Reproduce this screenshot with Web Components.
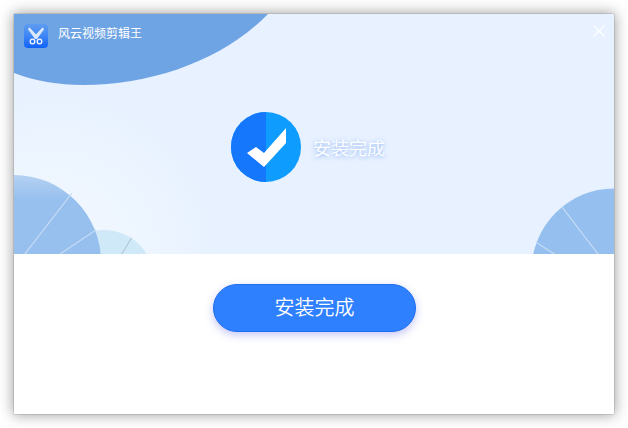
<!DOCTYPE html>
<html lang="zh">
<head>
<meta charset="utf-8">
<title>风云视频剪辑王</title>
<style>
html, body { margin: 0; background: #fff; }
body {
	padding: 14px;
	width: 600px;
	height: 400px;
	font-family: "Noto Sans CJK SC", "Liberation Sans", sans-serif;
	font-weight: 350;
}
</style>
</head>
<body>
<installer-window>
	<hero-panel slot="hero">
		<title-bar name="风云视频剪辑王"></title-bar>
		<status-badge>安装完成</status-badge>
	</hero-panel>
	<primary-button slot="footer">安装完成</primary-button>
</installer-window>

<script>
class InstallerWindow extends HTMLElement {
	constructor() {
		super()
		this.attachShadow({ mode: "open" }).innerHTML = `
		<style>
		:host {
			display: flex;
			flex-direction: column;
			width: 600px;
			height: 400px;
			background: #fff;
			box-shadow: 0 0 1px 0 rgba(0,0,0,.55), 0 0 13px 1px rgba(0,0,0,.38);
		}
		.footer {
			flex: 1;
			display: flex;
			justify-content: center;
			align-items: flex-start;
			padding-top: 30px;
			padding-left: 1px;
		}
		</style>
		<slot name="hero"></slot>
		<div class="footer"><slot name="footer"></slot></div>
		`
	}
}

class HeroPanel extends HTMLElement {
	constructor() {
		super()
		this.attachShadow({ mode: "open" }).innerHTML = `
		<style>
		:host {
			display: block;
			position: relative;
			height: 240px;
			overflow: hidden;
			background: radial-gradient(circle 165px at 40px 240px, #f2f8ff 0%, #edf5ff 60%, #e7f1ff 100%) #e7f1ff;
		}
		svg { position: absolute; left: 0; top: 0; }
		.content { position: relative; }
		</style>
		<svg width="600" height="240" viewBox="0 0 600 240">
			<defs>
				<linearGradient id="fade" x1="0" y1="0" x2="0" y2="1">
					<stop offset="0" stop-color="#b4d1f2"/>
					<stop offset=".14" stop-color="#97c0ee"/>
					<stop offset="1" stop-color="#95bfee"/>
				</linearGradient>
			</defs>
			<path d="M0 59C20 67 45 71 69 71C140 71 210 45 254 0H0Z" fill="#6fa4e4"/>
			<circle cx="90" cy="266" r="50" fill="#d0e9f9"/>
			<line x1="117.7" y1="223.7" x2="104" y2="246" stroke="#a9bdcf" stroke-width="1"/>
			<circle cx="0" cy="248" r="87" fill="url(#fade)"/>
			<g stroke="#c6dbf5" stroke-width="1.2">
				<line x1="57.7" y1="179.3" x2="7" y2="245"/>
				<line x1="82" y1="216" x2="40" y2="244"/>
			</g>
			<circle cx="600" cy="257" r="82.5" fill="#95bfee"/>
			<g stroke="#c6dbf5" stroke-width="1.2">
				<line x1="547.7" y1="192.7" x2="587" y2="244"/>
				<line x1="522.7" y1="228.7" x2="545" y2="243"/>
			</g>
		</svg>
		<div class="content"><slot></slot></div>
		`
	}
}

class TitleBar extends HTMLElement {
	constructor() {
		super()
		this.attachShadow({ mode: "open" }).innerHTML = `
		<style>
		:host {
			display: flex;
			align-items: center;
			gap: 10px;
			padding: 10px 9px 0 10px;
			height: 24px;
			color: #fff;
			font-size: 12px;
			font-weight: 400;
		}
		.name { flex: 1; line-height: 18px; margin-top: -7px; }
		svg { display: block; }
		.close { margin-top: -10px; }
		</style>
		<svg width="24" height="24" viewBox="0 0 24 24">
			<defs>
				<linearGradient id="logo" x1="0" y1="0" x2="0" y2="1">
					<stop offset="0" stop-color="#5f9cf0"/>
					<stop offset=".5" stop-color="#3d86f5"/>
					<stop offset="1" stop-color="#0f62fb"/>
				</linearGradient>
			</defs>
			<rect width="24" height="24" rx="4" fill="url(#logo)"/>
			<path d="M3.8 5 5.6 3.4 14 12.5 12.8 14.6 11 15Z" fill="#dbe8fa"/>
			<path d="M20.2 5 18.4 3.4 10 12.5 11.2 14.6 13 15Z" fill="#dbe8fa"/>
			<g fill="none" stroke="#f4f8ff" stroke-width="1.3">
				<circle cx="8.5" cy="17.5" r="2.3"/>
				<circle cx="15.5" cy="17.5" r="2.3"/>
			</g>
		</svg>
		<span class="name"></span>
		<svg class="close" width="12" height="12" viewBox="0 0 12 12">
			<path d="M.5 .5 11.5 11.5M11.5 .5 .5 11.5" stroke="#fff" stroke-width="1.2"/>
		</svg>
		`
		this.shadowRoot.querySelector(".name").textContent = this.getAttribute("name")
	}
}

class StatusBadge extends HTMLElement {
	constructor() {
		super()
		this.attachShadow({ mode: "open" }).innerHTML = `
		<style>
		:host {
			display: flex;
			align-items: center;
			gap: 13px;
			margin: 64px 0 0 217px;
			color: #fff;
			font-size: 18px;
		}
		svg { display: block; flex: none; }
		.label { text-shadow: 0 1px 4px rgba(60,120,240,.55); line-height: 24px; margin-left: -1px; }
		</style>
		<svg width="70" height="70" viewBox="0 0 70 70">
			<circle cx="35" cy="35" r="35" fill="#0e9cff"/>
			<path d="M35 0A35 35 0 0 0 35 70Z" fill="#1577fb"/>
			<path d="M16 41 25 35 33 41 55 16V31L33 55Z" fill="#fff"/>
		</svg>
		<span class="label"><slot></slot></span>
		`
	}
}

class PrimaryButton extends HTMLElement {
	constructor() {
		super()
		this.attachShadow({ mode: "open" }).innerHTML = `
		<style>
		:host {
			display: flex;
			align-items: center;
			justify-content: center;
			box-sizing: border-box;
			width: 203px;
			height: 48px;
			padding-bottom: 4px;
			border: 1px solid #1f6ff0;
			border-radius: 24px;
			background: #2f80ff;
			box-shadow: 0 3px 8px rgba(90,90,230,.35);
			color: #fff;
			font-size: 20px;
			cursor: pointer;
		}
		</style>
		<slot></slot>
		`
	}
}

customElements.define("installer-window", InstallerWindow)
customElements.define("hero-panel", HeroPanel)
customElements.define("title-bar", TitleBar)
customElements.define("status-badge", StatusBadge)
customElements.define("primary-button", PrimaryButton)
</script>
</body>
</html>
